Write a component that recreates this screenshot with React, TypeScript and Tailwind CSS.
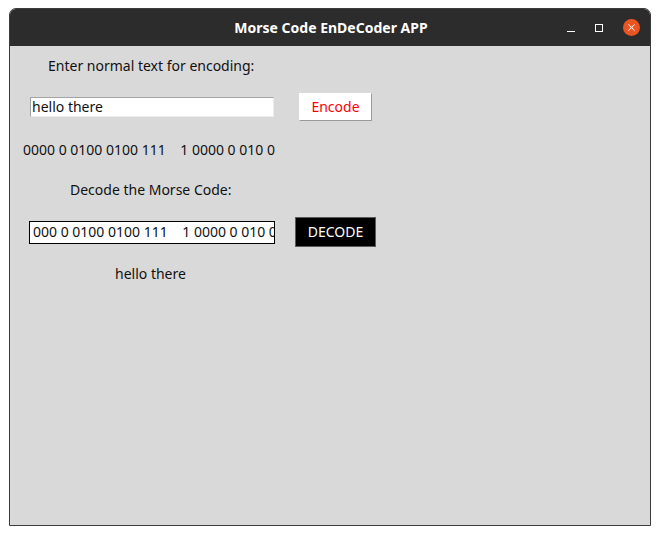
import { X } from "lucide-react";

export default function App() {
  return (
    <div className="w-[660px] h-[535px] bg-white pt-2 pl-[9px] font-['Noto_Sans',sans-serif]">
      <div className="w-[642px] h-[518px] flex flex-col rounded-t-[7px] border border-[#3c3c3c] overflow-hidden bg-[#d9d9d9]">
        <div className="h-[37px] shrink-0 bg-[#2c2c2c] flex items-center relative">
          <div className="flex-1 text-center text-white font-bold text-[14px] leading-none pl-[2px]">
            Morse Code EnDeCoder APP
          </div>
          <div className="absolute right-[10px] top-0 h-full flex items-center gap-[20px]">
            <div className="w-[8px] h-[1px] bg-white mt-[7px]" />
            <div className="w-[8px] h-[8px] border border-white" />
            <div className="w-[17px] h-[17px] rounded-full bg-[#e95420] flex items-center justify-center">
              <X className="w-[11px] h-[11px] text-white" strokeWidth={2.2} />
            </div>
          </div>
        </div>

        <div className="flex-1 relative text-[14px] text-[#111] leading-none">
          <div className="ml-[38px] mt-[13px] h-[14px]">Enter normal text for encoding:</div>

          <div className="flex items-center mt-[20px] ml-[20px] h-[28px]">
            <div className="w-[244px] h-[20px] bg-white border border-[#a3a3a3] border-b-[#ececec] border-r-[#ececec] flex items-center pl-[1px]">
              hello there
            </div>
            <div className="ml-[25px] w-[73px] h-[28px] bg-white border border-white border-b-[#9a9a9a] border-r-[#9a9a9a] flex items-center justify-center text-[#ff0000]">
              Encode
            </div>
          </div>

          <div className="ml-[13px] mt-[22px] h-[14px] whitespace-pre">0000 0 0100 0100 111    1 0000 0 010 0</div>

          <div className="ml-[60px] mt-[26px] h-[14px]">Decode the Morse Code:</div>

          <div className="flex items-center mt-[20px] ml-[19px] h-[30px]">
            <div className="w-[246px] h-[23px] bg-white border border-black flex items-center pl-[3px] overflow-hidden whitespace-pre">
              000 0 0100 0100 111    1 0000 0 010 0
            </div>
            <div className="ml-[20px] w-[81px] h-[30px] bg-black border border-[#5a5a5a] flex items-center justify-center text-white">
              DECODE
            </div>
          </div>

          <div className="ml-[105px] mt-[20px] h-[14px]">hello there</div>
        </div>
      </div>
    </div>
  );
}
